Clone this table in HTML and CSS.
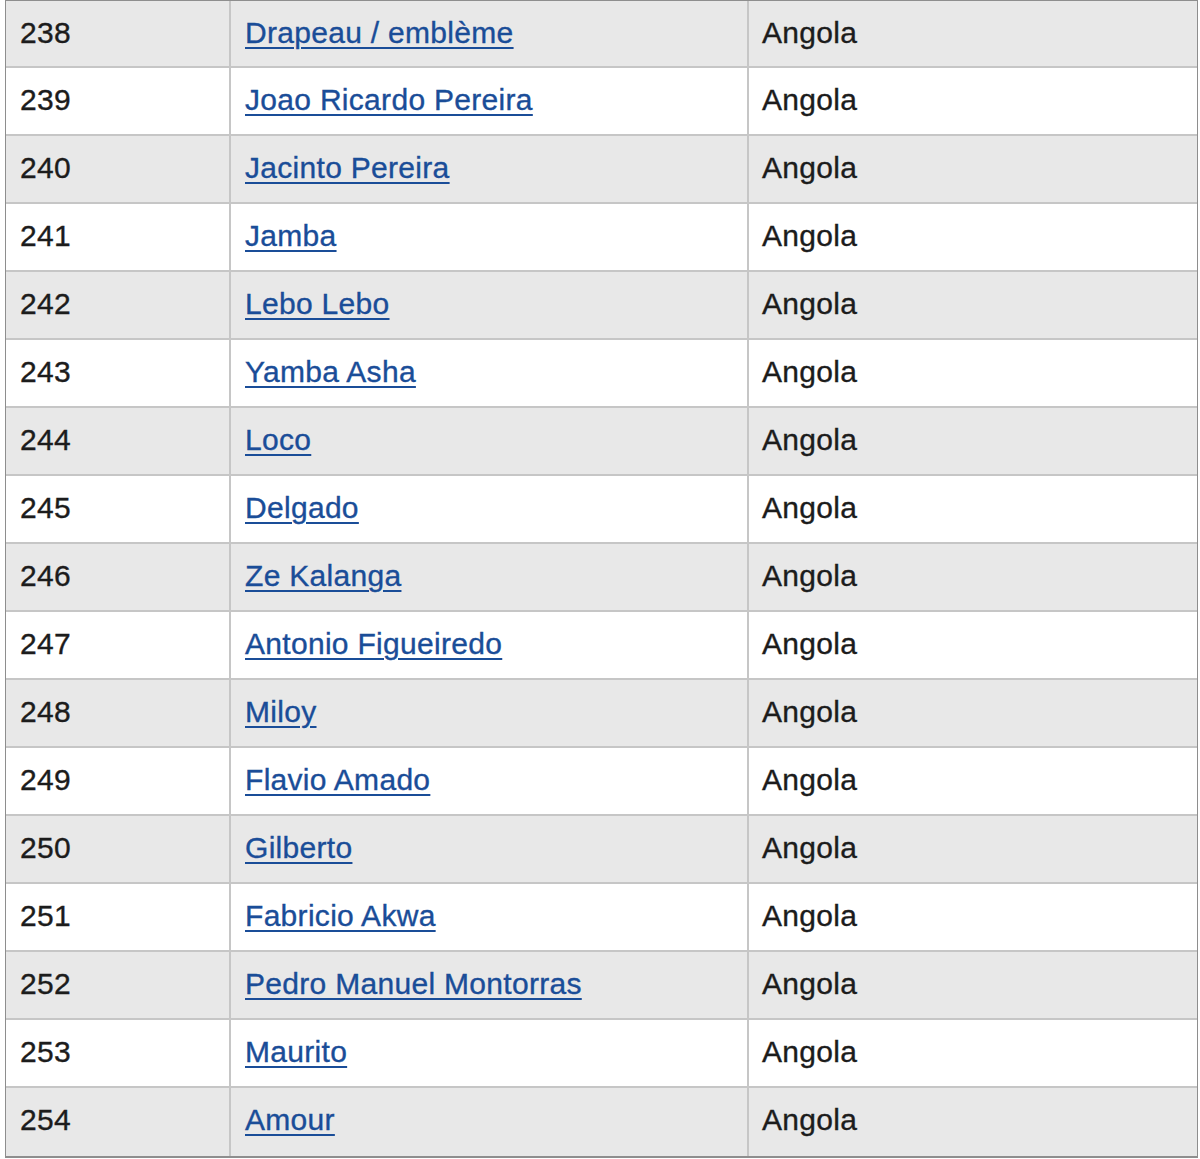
FILE: index.html
```html
<!DOCTYPE html>
<html lang="fr">
<head>
<meta charset="utf-8">
<title>Liste</title>
<link rel="stylesheet" href="styles.css">
</head>
<body>
<div class="frame">
<table class="list">
<tbody>
<tr class="odd"><td class="num">238</td><td class="name"><a href="#">Drapeau / emblème</a></td><td class="country">Angola</td></tr>
<tr class="even"><td class="num">239</td><td class="name"><a href="#">Joao Ricardo Pereira</a></td><td class="country">Angola</td></tr>
<tr class="odd"><td class="num">240</td><td class="name"><a href="#">Jacinto Pereira</a></td><td class="country">Angola</td></tr>
<tr class="even"><td class="num">241</td><td class="name"><a href="#">Jamba</a></td><td class="country">Angola</td></tr>
<tr class="odd"><td class="num">242</td><td class="name"><a href="#">Lebo Lebo</a></td><td class="country">Angola</td></tr>
<tr class="even"><td class="num">243</td><td class="name"><a href="#">Yamba Asha</a></td><td class="country">Angola</td></tr>
<tr class="odd"><td class="num">244</td><td class="name"><a href="#">Loco</a></td><td class="country">Angola</td></tr>
<tr class="even"><td class="num">245</td><td class="name"><a href="#">Delgado</a></td><td class="country">Angola</td></tr>
<tr class="odd"><td class="num">246</td><td class="name"><a href="#">Ze Kalanga</a></td><td class="country">Angola</td></tr>
<tr class="even"><td class="num">247</td><td class="name"><a href="#">Antonio Figueiredo</a></td><td class="country">Angola</td></tr>
<tr class="odd"><td class="num">248</td><td class="name"><a href="#">Miloy</a></td><td class="country">Angola</td></tr>
<tr class="even"><td class="num">249</td><td class="name"><a href="#">Flavio Amado</a></td><td class="country">Angola</td></tr>
<tr class="odd"><td class="num">250</td><td class="name"><a href="#">Gilberto</a></td><td class="country">Angola</td></tr>
<tr class="even"><td class="num">251</td><td class="name"><a href="#">Fabricio Akwa</a></td><td class="country">Angola</td></tr>
<tr class="odd"><td class="num">252</td><td class="name"><a href="#">Pedro Manuel Montorras</a></td><td class="country">Angola</td></tr>
<tr class="even"><td class="num">253</td><td class="name"><a href="#">Maurito</a></td><td class="country">Angola</td></tr>
<tr class="odd"><td class="num">254</td><td class="name"><a href="#">Amour</a></td><td class="country">Angola</td></tr>
</tbody>
</table>
</div>
</body>
</html>
```

FILE: styles.css
```css
html, body {
  margin: 0;
  padding: 0;
  background: #ffffff;
}

body {
  font-family: "Liberation Sans", Arial, sans-serif;
  font-size: 30px;
  letter-spacing: 0.3px;
  color: #1c1c1c;
  -webkit-text-stroke: 0.35px currentColor;
}

.frame {
  margin-left: 5px;
  width: 1191px;
  border: 1px solid #8e8e8e;
  border-bottom-width: 2px;
}

.list {
  border-collapse: separate;
  border-spacing: 0;
  table-layout: fixed;
  width: 1191px;
}

.list td {
  box-sizing: border-box;
  padding: 0 0 0 14px;
  height: 68px;
  line-height: 64px;
  border-top: 2px solid #c6c6c6;
  vertical-align: top;
  white-space: nowrap;
}

.list tr:first-child td {
  border-top: 0;
  height: 65px;
  line-height: 63px;
}

.list tr:last-child td {
  height: 70px;
}

.list td + td {
  border-left: 2px solid #c6c6c6;
}

.list .num {
  width: 223px;
}

.list .name {
  width: 518px;
}

.list .country {
  width: 450px;
  padding-left: 13px;
}

.odd td {
  background: #e8e8e8;
}

.even td {
  background: #ffffff;
}

.name a {
  color: #1a4d98;
  text-decoration: underline;
  text-decoration-thickness: 2px;
  text-underline-offset: 4px;
}
```
